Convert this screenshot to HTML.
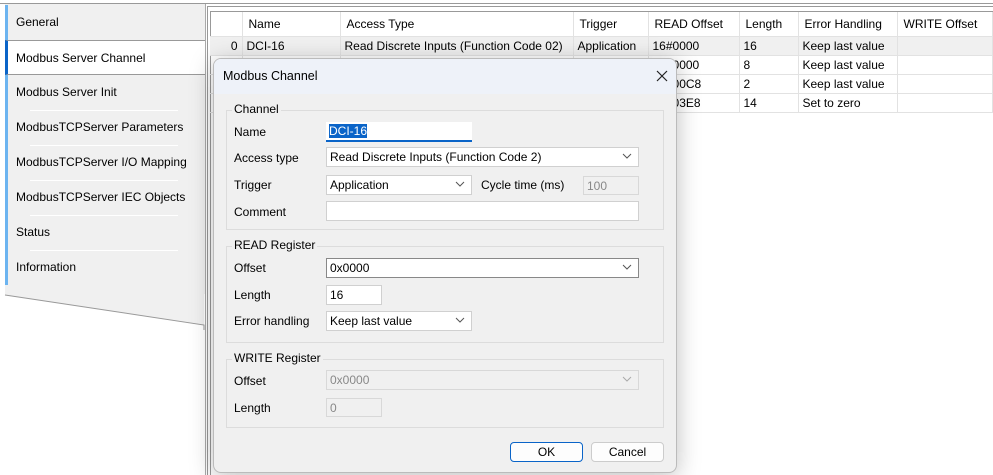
<!DOCTYPE html>
<html><head><meta charset="utf-8"><style>
*{box-sizing:border-box;margin:0;padding:0}
body{width:993px;height:475px;overflow:hidden;background:#fff;font-family:"Liberation Sans",sans-serif;font-size:12px;color:#000;position:relative}
.abs{position:absolute}
.tab{position:absolute;left:5px;width:200px;height:35px;background:#f0f0f0;border-left:3px solid #6cb4f0;padding:10px 0 0 8px;font-size:12px}
.tab.sel{background:#fff;border-left-color:#0a64c8;border-top:1px solid #999;border-bottom:1px solid #999}
.sep{position:absolute;left:30px;width:148px;height:1px;background:#fff}
table{border-collapse:collapse;position:absolute;left:210px;top:12px;width:783px}
td{height:19px;border-right:1px solid #e2e2e2;border-bottom:1px solid #e2e2e2;padding:0 4px;font-size:12px;white-space:nowrap}
tr.h td{height:24px;padding-left:6px}
.inp{position:absolute;background:#fff;border:1px solid #d0d0d0;padding:2px 3px;font-size:12px;height:20px}
.dis{background:#f0f0f0;color:#888;border-color:#d8d8d8}
.chev{position:absolute;right:5px;top:2px;width:12px;height:12px}
.grp{position:absolute;border:1px solid #dcdcdc}
.gl{position:absolute;background:#f0f0f0;padding:0 2px;font-size:12px}
.lbl{position:absolute;left:234px;font-size:12px}
.btn{position:absolute;height:20px;border:1px solid #ccc;border-radius:4px;background:#fdfdfd;text-align:center;line-height:18px}
</style></head><body>
<div class="abs" style="left:0;top:3px;width:993px;height:1px;background:#999"></div>
<div class="abs" style="left:5px;top:4px;width:1px;height:290px;background:#999"></div>
<div class="abs" style="left:205px;top:4px;width:1px;height:471px;background:#aaa"></div>
<div class="abs" style="left:207px;top:6px;width:786px;height:1px;background:#999"></div>
<div class="abs" style="left:207px;top:6px;width:1px;height:469px;background:#999"></div>
<div class="abs" style="left:210px;top:11px;width:783px;height:1px;background:#999"></div>
<div class="abs" style="left:210px;top:11px;width:1px;height:464px;background:#999"></div>
<div class="abs" style="left:5px;top:4px;width:200px;height:290px;background:#f0f0f0"></div>
<div class="tab" style="top:5px">General</div>
<div class="tab sel" style="top:40px">Modbus Server Channel</div>
<div class="tab" style="top:75px">Modbus Server Init</div>
<div class="tab" style="top:110px">ModbusTCPServer Parameters</div>
<div class="tab" style="top:145px">ModbusTCPServer I/O Mapping</div>
<div class="tab" style="top:180px">ModbusTCPServer IEC Objects</div>
<div class="tab" style="top:215px">Status</div>
<div class="tab" style="top:250px">Information</div>
<div class="sep" style="top:110px"></div><div class="sep" style="top:145px"></div><div class="sep" style="top:180px"></div><div class="sep" style="top:215px"></div><div class="sep" style="top:250px"></div><div class="sep" style="top:285px"></div>
<svg class="abs" style="left:0;top:285px" width="210" height="45"><polygon points="5,0 204,0 204,40 5,10" fill="#f0f0f0"/><polyline points="5,10 204,40 204,45" fill="none" stroke="#999"/></svg>
<table>
<tr class="h"><td style="width:32px"></td><td style="width:98px">Name</td><td style="width:233px">Access Type</td><td style="width:75px">Trigger</td><td style="width:91px">READ Offset</td><td style="width:59px">Length</td><td style="width:99px">Error Handling</td><td>WRITE Offset</td></tr>
<tr style="background:#f0f0f0"><td style="text-align:right">0</td><td>DCI-16</td><td>Read Discrete Inputs (Function Code 02)</td><td>Application</td><td>16#0000</td><td>16</td><td>Keep last value</td><td></td></tr>
<tr><td></td><td></td><td></td><td></td><td>16#0000</td><td>8</td><td>Keep last value</td><td></td></tr>
<tr><td></td><td></td><td></td><td></td><td>16#00C8</td><td>2</td><td>Keep last value</td><td></td></tr>
<tr><td></td><td></td><td></td><td></td><td>16#03E8</td><td>14</td><td>Set to zero</td><td></td></tr>
</table>
<div class="abs" style="left:213px;top:58px;width:464px;height:415px;background:#f0f0f0;border:1px solid #bbb;border-radius:8px;box-shadow:0 4px 24px rgba(0,0,0,.25);overflow:hidden">
<div style="height:35px;background:#eef2f9;padding:10px 0 0 9px;font-size:12.5px">Modbus Channel</div>
<svg class="abs" style="left:441px;top:10px" width="14" height="14"><path d="M2 2L12 12M12 2L2 12" stroke="#222" stroke-width="1.2"/></svg>
</div>
<div class="grp" style="left:226px;top:110px;width:438px;height:120px"></div><div class="gl" style="left:232px;top:102px">Channel</div>
<div class="grp" style="left:226px;top:246px;width:438px;height:97px"></div><div class="gl" style="left:232px;top:238px">READ Register</div>
<div class="grp" style="left:226px;top:359px;width:438px;height:69px"></div><div class="gl" style="left:232px;top:351px">WRITE Register</div>
<div class="lbl" style="top:125px">Name</div>
<div class="inp" style="left:326px;top:122px;width:146px;border:none;border-bottom:2px solid #0a64c8"><span style="background:#0a64c8;color:#fff">DCI-16</span></div>
<div class="lbl" style="top:151px">Access type</div>
<div class="inp" style="left:326px;top:147px;width:313px">Read Discrete Inputs (Function Code 2)<svg class="chev" viewBox="0 0 12 12"><path d="M2 4L6 8L10 4" fill="none" stroke="#555"/></svg></div>
<div class="lbl" style="top:178px">Trigger</div>
<div class="inp" style="left:326px;top:175px;width:146px">Application<svg class="chev" viewBox="0 0 12 12"><path d="M2 4L6 8L10 4" fill="none" stroke="#555"/></svg></div>
<div class="abs" style="left:481px;top:178px">Cycle time (ms)</div>
<div class="inp dis" style="left:583px;top:176px;width:56px;height:19px">100</div>
<div class="lbl" style="top:205px">Comment</div>
<div class="inp" style="left:326px;top:201px;width:313px"></div>
<div class="lbl" style="top:261px">Offset</div>
<div class="inp" style="left:326px;top:258px;width:313px;border-color:#888">0x0000<svg class="chev" viewBox="0 0 12 12"><path d="M2 4L6 8L10 4" fill="none" stroke="#555"/></svg></div>
<div class="lbl" style="top:288px">Length</div>
<div class="inp" style="left:326px;top:285px;width:56px">16</div>
<div class="lbl" style="top:314px">Error handling</div>
<div class="inp" style="left:326px;top:311px;width:146px">Keep last value<svg class="chev" viewBox="0 0 12 12"><path d="M2 4L6 8L10 4" fill="none" stroke="#555"/></svg></div>
<div class="lbl" style="top:374px">Offset</div>
<div class="inp dis" style="left:326px;top:370px;width:313px">0x0000<svg class="chev" viewBox="0 0 12 12"><path d="M2 4L6 8L10 4" fill="none" stroke="#aaa"/></svg></div>
<div class="lbl" style="top:401px">Length</div>
<div class="inp dis" style="left:326px;top:398px;width:56px;height:19px">0</div>
<div class="btn" style="left:510px;top:442px;width:73px;border-color:#0a64c8">OK</div>
<div class="btn" style="left:591px;top:442px;width:73px">Cancel</div>
</body></html>
